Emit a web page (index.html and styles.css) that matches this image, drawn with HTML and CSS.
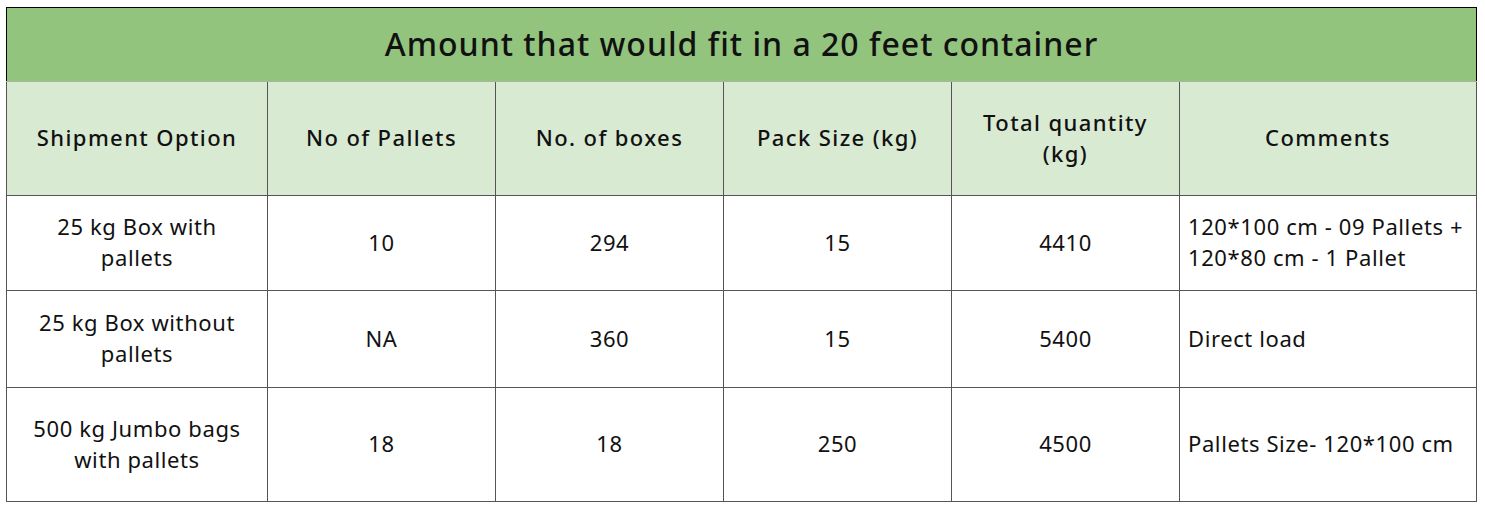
FILE: index.html
```html
<!DOCTYPE html>
<html>
<head>
<meta charset="utf-8">
<link rel="stylesheet" href="styles.css">
</head>
<body>
<table class="grid">
  <colgroup>
    <col class="c1"><col class="c2"><col class="c2"><col class="c2"><col class="c2"><col class="c6">
  </colgroup>
  <tr class="title-row"><th colspan="6">Amount that would fit in a 20 feet container</th></tr>
  <tr class="head-row">
    <th>Shipment Option</th>
    <th>No of Pallets</th>
    <th>No. of boxes</th>
    <th>Pack Size (kg)</th>
    <th>Total quantity<br>(kg)</th>
    <th>Comments</th>
  </tr>
  <tr class="r1">
    <td>25 kg Box with<br>pallets</td>
    <td>10</td>
    <td>294</td>
    <td>15</td>
    <td>4410</td>
    <td class="left">120*100 cm - 09 Pallets +<br>120*80 cm - 1 Pallet</td>
  </tr>
  <tr class="r2">
    <td>25 kg Box without<br>pallets</td>
    <td>NA</td>
    <td>360</td>
    <td>15</td>
    <td>5400</td>
    <td class="left">Direct load</td>
  </tr>
  <tr class="r3">
    <td>500 kg Jumbo bags<br>with pallets</td>
    <td>18</td>
    <td>18</td>
    <td>250</td>
    <td>4500</td>
    <td class="left">Pallets Size- 120*100 cm</td>
  </tr>
</table>
</body>
</html>
```

FILE: styles.css
```css
html, body {
  margin: 0;
  padding: 0;
  background: #ffffff;
}
body {
  padding: 7px 0 0 6px;
  font-family: "Noto Sans", "DejaVu Sans", sans-serif;
  color: #111;
}
.grid {
  border-collapse: collapse;
  table-layout: fixed;
  width: 1470px;
  border-top: 1px solid #000;
  border-left: 1px solid #000;
}
.c1 { width: 261px; }
.c2 { width: 228px; }
.c6 { width: 297px; }
.grid th, .grid td {
  border: 1px solid #555;
  text-align: center;
  vertical-align: middle;
  padding: 0 8px;
  line-height: 31px;
  white-space: nowrap;
}
.title-row th {
  background: #93c47d;
  height: 71px;
  font-size: 32px;
  font-weight: 500;
  letter-spacing: 1px;
  border: 1px solid #000;
  border-bottom: 1px solid #a7b8a0;
  padding-bottom: 2px;
}
.head-row th {
  background: #d9ead3;
  height: 111px;
  font-size: 22px;
  font-weight: 500;
  letter-spacing: 1.4px;
  padding-bottom: 2px;
}
.grid td {
  font-size: 22px;
  font-weight: 400;
  letter-spacing: 0.6px;
  padding-bottom: 2px;
}
.r1 td { height: 92px; }
.r2 td { height: 94px; }
.r3 td { height: 111px; }
.grid td.left {
  text-align: left;
}
```
